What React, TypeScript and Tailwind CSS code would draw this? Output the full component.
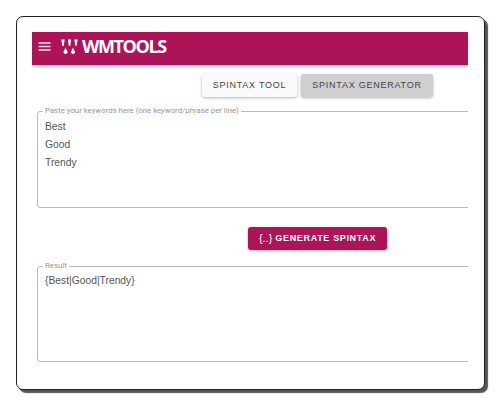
export default function App() {
  const font = { fontFamily: 'Roboto, Arial, sans-serif' };
  const body = { fontFamily: '"Liberation Sans", Arial, sans-serif' };
  return (
    <div className="w-[500px] h-[404px] bg-white pt-4 pl-4 overflow-hidden" style={font}>
      <div className="w-[469px] h-[374px] bg-white border border-[#222] rounded-[7px] shadow-[3px_3px_1px_#555] pt-[15px] pl-[15px]">
        <div className="w-[436px] h-[340px] overflow-hidden">
          <header className="h-[33px] bg-[#ad1457] flex items-center pl-[6px] shadow-[0_2px_3px_rgba(0,0,0,0.2)]">
            <svg width="13" height="9" viewBox="0 0 13 9" className="mb-[5px]">
              <path d="M0.500 1h12M0.500 4.500h12M0.500 8h12" stroke="#f8dbe7" strokeWidth="1.500" />
            </svg>
            <svg width="17" height="17" viewBox="0 0 17 17" className="ml-[10px] mb-[3px]">
              <path d="M0.300 0.500h3.400l-1 6.500h-1.400zM6.800 0.500h3.400l-1 6.500h-1.400zM13.300 0.500h3.400l-1.200 6.500h-1.200zM4.500 8.500l1.900 4a2 2 0 1 1-3.800 0zM12 8.500l1.900 4a2 2 0 1 1-3.800 0z" fill="#fff" />
            </svg>
            <span className="ml-[4px] mb-[4px] text-[18px] font-bold text-white tracking-[-1.400px]" style={{ fontFamily: '"Open Sans", sans-serif' }}>WMTOOLS</span>
          </header>
          <div className="mt-[9px] flex gap-[4px] pl-[170px]" style={body}>
            <button className="h-[23px] w-[95px] rounded-[3px] bg-[#fafafa] text-[9px] tracking-[0.750px] text-[#444] shadow-[0_1px_3px_rgba(0,0,0,0.3)]">SPINTAX TOOL</button>
            <button className="h-[23px] w-[132px] rounded-[3px] bg-[#cfcfcf] text-[9px] tracking-[0.750px] text-[#444] shadow-[0_1px_3px_rgba(0,0,0,0.3)]">SPINTAX GENERATOR</button>
          </div>
          <fieldset className="mt-[10px] ml-[5px] w-[460px] h-[101px] border border-[#bbb] rounded-[3px] pl-[7px]">
            <legend className="-ml-[2px] px-[2px] text-[7.800px] leading-[8px] text-[#999]">Paste your keywords here (one keyword/phrase per line)</legend>
            <div className="text-[10.300px] leading-[18px] text-[#555] mt-[3px]" style={body}>
              <div>Best</div>
              <div>Good</div>
              <div>Trendy</div>
            </div>
          </fieldset>
          <div className="mt-[19px] pl-[216px]">
            <button className="h-[23px] w-[139px] rounded-[3px] bg-[#ad1457] text-white text-[9px] font-bold tracking-[0.660px] flex items-center justify-center gap-[3px] shadow-[0_1px_3px_rgba(0,0,0,0.3)]" style={body}>
              <span className="text-[11px] tracking-normal font-normal">{'{..}'}</span>
              <span>GENERATE SPINTAX</span>
            </button>
          </div>
          <fieldset className="mt-[12px] ml-[5px] w-[460px] h-[100px] border border-[#bbb] rounded-[3px] pl-[7px]">
            <legend className="-ml-[2px] px-[2px] text-[7.800px] leading-[8px] text-[#999]">Result</legend>
            <div className="mt-[3px] text-[10.300px] leading-[16px] text-[#555]" style={body}>{'{Best|Good|Trendy}'}</div>
          </fieldset>
        </div>
      </div>
    </div>
  );
}
